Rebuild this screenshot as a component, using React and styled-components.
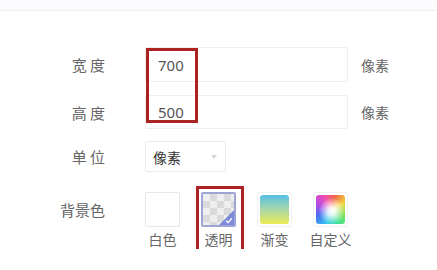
import React from 'react';
import styled, { createGlobalStyle } from 'styled-components';

const GlobalStyle = createGlobalStyle`
  html, body {
    margin: 0;
    padding: 0;
    background: #fff;
    font-family: "Noto Sans CJK SC", "Noto Sans", sans-serif;
  }
`;

const TopBar = styled.div`
  height: 10px;
  background: #fbfafc;
  border-bottom: 1px solid #f1eff3;
`;

const Form = styled.div`
  position: relative;
  padding-top: 36px;
  display: flex;
  flex-direction: column;
`;

const Row = styled.div`
  display: grid;
  grid-template-columns: 105px auto auto;
  justify-content: start;
  column-gap: 40px;
  align-items: ${(p) => (p.$top ? 'start' : 'center')};
  margin-bottom: ${(p) => p.$gap || 0}px;
`;

const Label = styled.div`
  text-align: right;
  font-size: 15px;
  color: #666;
  line-height: ${(p) => (p.$lh ? `${p.$lh}px` : 'normal')};
`;

const Input = styled.div`
  box-sizing: border-box;
  width: 203px;
  height: ${(p) => p.$h}px;
  border: 1px solid #eeeeee;
  border-radius: 2px;
  padding-left: 12px;
  display: flex;
  align-items: center;
  font-size: 15px;
  color: #555;
  font-family: "Noto Sans", sans-serif;
`;

const Unit = styled.div`
  margin-left: -27px;
  font-size: 14px;
  color: #666;
`;

const Select = styled.div`
  box-sizing: border-box;
  width: 81px;
  height: 31px;
  border: 1px solid #ebebeb;
  border-radius: 2px;
  padding: 0 8px 0 7px;
  display: flex;
  align-items: center;
  justify-content: space-between;
  font-size: 14px;
  color: #333;
`;

const Caret = styled.span`
  width: 0;
  height: 0;
  border-left: 3px solid transparent;
  border-right: 3px solid transparent;
  border-top: 4px solid #d6d6d6;
`;

const Options = styled.div`
  display: flex;
  gap: 21px;
`;

const Option = styled.div`
  position: relative;
  width: 35px;
  display: flex;
  flex-direction: column;
  align-items: center;

  ${(p) =>
    p.$marked &&
    `
    &::after {
      content: '';
      position: absolute;
      top: -6px;
      left: -5px;
      right: -8px;
      bottom: -3px;
      border: 3px solid #ab2222;
    }
  `}
`;

const Swatch = styled.div`
  position: relative;
  box-sizing: border-box;
  width: 35px;
  height: 35px;
  border-radius: 2px;
  overflow: hidden;
  ${(p) => p.$kind === 'white' && `border: 1px solid #e8e8e8; background: #fff;`}
  ${(p) =>
    p.$kind === 'clear' &&
    `
    border: 2px solid #9ea4d6;
    background-color: #efefef;
    background-image:
      linear-gradient(45deg, #dadada 25%, transparent 25%, transparent 75%, #dadada 75%),
      linear-gradient(45deg, #dadada 25%, transparent 25%, transparent 75%, #dadada 75%);
    background-size: 14px 14px;
    background-position: 0 0, 7px 7px;
  `}
  ${(p) =>
    (p.$kind === 'gradient' || p.$kind === 'custom') &&
    `
    border: 1px solid #eef0f4;
    padding: 2px;
    background: #fff;
  `}
`;

const Fill = styled.div`
  width: 100%;
  height: 100%;
  border-radius: 3px;
  background: ${(p) => p.$bg};
`;

const Corner = styled.div`
  position: absolute;
  right: 0;
  bottom: 0;
  width: 0;
  height: 0;
  border-left: 15px solid transparent;
  border-bottom: 15px solid #7e89d8;
`;

const Check = styled.svg`
  position: absolute;
  right: 1px;
  bottom: 1px;
`;

const OptionText = styled.div`
  margin-top: 2px;
  font-size: 14px;
  color: #666;
  white-space: nowrap;
`;

const Highlight = styled.div`
  position: absolute;
  top: 37px;
  left: 146px;
  width: 52px;
  height: 75px;
  box-sizing: border-box;
  border: 3px solid #ab2222;
  pointer-events: none;
`;

const swatches = [
  { kind: 'white', text: '白色' },
  { kind: 'clear', text: '透明', marked: true },
  { kind: 'gradient', text: '渐变', bg: 'linear-gradient(180deg, #55c0e6 0%, #a8d8a8 50%, #eceb55 100%)' },
  {
    kind: 'custom',
    text: '自定义',
    bg: 'radial-gradient(circle at 55% 55%, #fff 0%, rgba(255,255,255,0.85) 18%, rgba(255,255,255,0) 60%), conic-gradient(from 200deg, #34c2f0, #4a6cf0, #b04ce8, #f04cb0, #f06a4a, #f0d83c, #7ae04a, #34e0a0, #34c2f0)',
  },
];

export default function App() {
  return (
    <>
      <GlobalStyle />
      <TopBar />
      <Form>
        <Row $gap={13}>
          <Label>宽 度</Label>
          <Input $h={35}>700</Input>
          <Unit>像素</Unit>
        </Row>
        <Row $gap={12}>
          <Label>高 度</Label>
          <Input $h={34}>500</Input>
          <Unit>像素</Unit>
        </Row>
        <Row $gap={20}>
          <Label>单 位</Label>
          <Select>
            像素
            <Caret />
          </Select>
        </Row>
        <Row $top>
          <Label $lh={36}>背景色</Label>
          <Options>
            {swatches.map((s) => (
              <Option key={s.kind} $marked={s.marked}>
                <Swatch $kind={s.kind}>
                  {s.bg && <Fill $bg={s.bg} />}
                  {s.kind === 'clear' && (
                    <>
                      <Corner />
                      <Check width="8" height="7" viewBox="0 0 8 7">
                        <path d="M1 3.8 L3 5.6 L7 1.2" fill="none" stroke="#fff" strokeWidth="1.3" />
                      </Check>
                    </>
                  )}
                </Swatch>
                <OptionText>{s.text}</OptionText>
              </Option>
            ))}
          </Options>
        </Row>
        <Highlight />
      </Form>
    </>
  );
}
